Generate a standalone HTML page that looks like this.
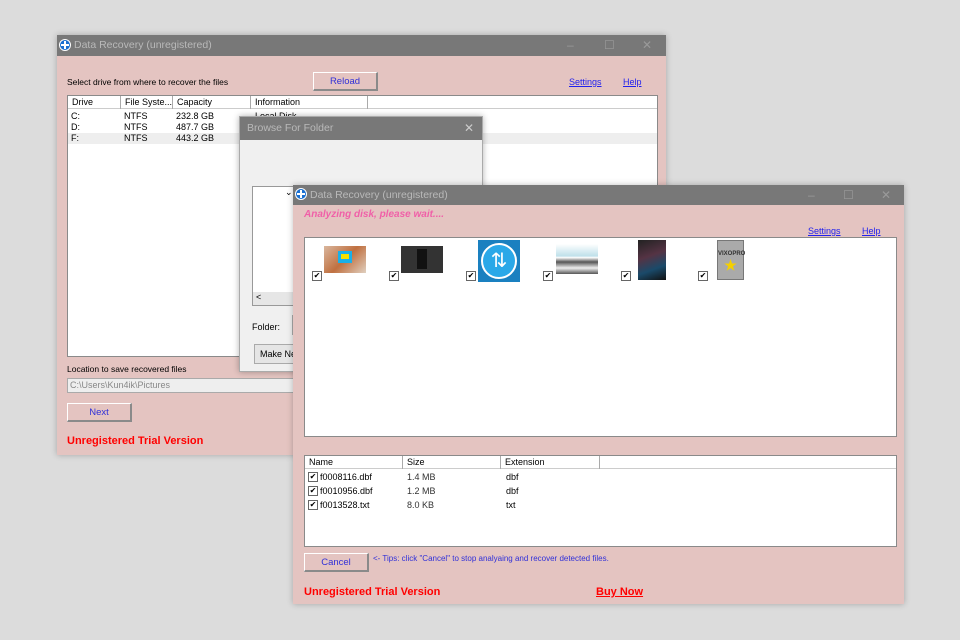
<!DOCTYPE html>
<html><head><meta charset="utf-8"><style>
*{margin:0;padding:0;box-sizing:border-box}
body{width:960px;height:640px;background:#dcdcdc;position:relative;overflow:hidden;font-family:"Liberation Sans",Arial,sans-serif;font-size:9px;color:#000}
.a{position:absolute}
.win{background:#e4c4c1;box-shadow:0 0 6px rgba(0,0,0,.25)}
.tb{background:#787878;color:#b9b9b9;font-size:10.5px;height:21px;line-height:21px;padding-left:17px}
.ico{position:absolute;left:2px;top:4px;width:12px;height:12px;border-radius:50%;background:#1a6fd0;border:1px solid #fff}
.ico:before{content:"";position:absolute;left:4px;top:1px;width:2px;height:8px;background:#fff}
.ico:after{content:"";position:absolute;left:1px;top:4px;width:8px;height:2px;background:#fff}
.ctl{position:absolute;top:0;color:#9a9a9a;font-size:12px}
.white{background:#fff;border:1px solid #8a8a8a}
.hdr{background:#fff;border-bottom:1px solid #ccc;height:13px;line-height:12px;font-size:9px}
.hdr span{position:absolute;top:0;height:13px;border-right:1px solid #aaa;padding-left:4px}
.btn{background:#e4c4c1;border:1px solid #fff;border-right:2px solid #8a8a8a;border-bottom:2px solid #8a8a8a;color:#3030d8;text-align:center;font-size:9.5px}
.link{color:#2222ee;text-decoration:underline;font-size:9px}
.red{color:#f00;font-weight:bold;font-size:11px}
.cb{position:absolute;width:10px;height:10px;border:1px solid #666;background:#fff;font-size:8px;line-height:8px;text-align:center}
.row{position:absolute;font-size:9px;white-space:nowrap}
</style></head><body>

<div class="a win" style="left:57px;top:35px;width:609px;height:420px">
 <div class="tb" style="position:relative">Data Recovery (unregistered)<div class="ico"></div>
  <span class="ctl" style="left:510px">–</span><span class="ctl" style="left:547px">☐</span><span class="ctl" style="left:585px">✕</span></div>
 <div class="a" style="left:10px;top:42px;font-size:8.5px">Select drive from where to recover the files</div>
 <div class="a btn" style="left:256px;top:37px;width:65px;height:19px;line-height:17px">Reload</div>
 <div class="a link" style="left:512px;top:42px">Settings</div>
 <div class="a link" style="left:566px;top:42px">Help</div>
 <div class="a white" style="left:10px;top:60px;width:591px;height:262px">
  <div class="hdr" style="position:relative">
   <span style="left:0;width:53px">Drive</span><span style="left:53px;width:52px">File Syste...</span><span style="left:105px;width:78px">Capacity</span><span style="left:183px;width:117px">Information</span>
  </div>
  <div class="row" style="left:3px;top:15px">C:</div><div class="row" style="left:56px;top:15px">NTFS</div><div class="row" style="left:108px;top:15px">232.8 GB</div><div class="row" style="left:187px;top:15px">Local Disk</div>
  <div class="row" style="left:3px;top:26px">D:</div><div class="row" style="left:56px;top:26px">NTFS</div><div class="row" style="left:108px;top:26px">487.7 GB</div>
  <div class="a" style="left:0;top:37px;width:589px;height:11px;background:#eee"></div>
  <div class="row" style="left:3px;top:37px">F:</div><div class="row" style="left:56px;top:37px">NTFS</div><div class="row" style="left:108px;top:37px">443.2 GB</div>
 </div>
 <div class="a" style="left:10px;top:329px;font-size:8.5px">Location to save recovered files</div>
 <div class="a" style="left:10px;top:343px;width:300px;height:15px;background:#eee;border:1px solid #aaa;color:#888;line-height:13px;padding-left:2px;font-size:9px">C:\Users\Kun4ik\Pictures</div>
 <div class="a btn" style="left:10px;top:368px;width:65px;height:19px;line-height:17px">Next</div>
 <div class="a red" style="left:10px;top:400px">Unregistered Trial Version</div>
</div>

<div class="a" style="left:239px;top:116px;width:244px;height:256px;background:#f0f0f0;border:1px solid #aaa;box-shadow:0 0 6px rgba(0,0,0,.3)">
 <div style="background:#787878;color:#b9b9b9;font-size:10.5px;height:23px;line-height:23px;padding-left:7px;position:relative">Browse For Folder<span style="position:absolute;left:224px;color:#ccc;font-size:12px">✕</span></div>
 <div class="a" style="left:12px;top:69px;width:60px;height:120px;background:#fff;border:1px solid #999">
  <span class="a" style="left:32px;top:0;font-size:9px">⌄</span>
  <div class="a" style="left:0;top:105px;width:58px;height:13px;background:#e6e6e6"><span style="padding-left:3px">&lt;</span></div>
 </div>
 <div class="a" style="left:12px;top:205px;font-size:9px">Folder:</div>
 <div class="a" style="left:52px;top:198px;width:10px;height:20px;border:1px solid #aaa;background:#fff"></div>
 <div class="a" style="left:14px;top:227px;width:60px;height:20px;border:1px solid #aaa;background:#e5e5e5;line-height:18px;padding-left:5px;font-size:9px">Make New</div>
</div>

<div class="a win" style="left:293px;top:185px;width:611px;height:419px">
 <div class="tb" style="position:relative;height:20px;line-height:20px">Data Recovery (unregistered)<div class="ico" style="top:3px"></div>
  <span class="ctl" style="left:515px">–</span><span class="ctl" style="left:550px">☐</span><span class="ctl" style="left:588px">✕</span></div>
 <div class="a" style="left:11px;top:24px;color:#f060a8;font-weight:bold;font-style:italic;font-size:10px">Analyzing disk, please wait....</div>
 <div class="a link" style="left:515px;top:41px">Settings</div>
 <div class="a link" style="left:569px;top:41px">Help</div>
 <div class="a white" style="left:11px;top:52px;width:593px;height:200px">
  <div class="a" style="left:19px;top:8px;width:42px;height:27px;background:linear-gradient(135deg,#d9b79e,#c07040 50%,#e0d0c0)"><div class="a" style="left:14px;top:5px;width:14px;height:12px;background:#1ab0e8"><div style="margin:3px;width:8px;height:5px;background:#f5e000"></div></div></div>
  <div class="cb" style="left:7px;top:33px">✔</div>
  <div class="a" style="left:96px;top:8px;width:42px;height:27px;background:#333"><div style="margin:3px auto;width:10px;height:20px;background:#111"></div></div>
  <div class="cb" style="left:84px;top:33px">✔</div>
  <div class="a" style="left:173px;top:2px;width:42px;height:42px;background:#1a80c0"><div style="margin:3px;width:36px;height:36px;border-radius:50%;background:#2aa8e8;border:2px solid #fff;color:#fff;font-size:20px;text-align:center;line-height:32px">⇅</div></div>
  <div class="cb" style="left:161px;top:33px">✔</div>
  <div class="a" style="left:251px;top:6px;width:42px;height:30px;background:linear-gradient(#fff,#bfe0ea 40%,#fff 45%,#555 60%,#eee 80%,#555)"></div>
  <div class="cb" style="left:238px;top:33px">✔</div>
  <div class="a" style="left:333px;top:2px;width:28px;height:40px;background:linear-gradient(160deg,#222,#534 40%,#1a4a6a 70%,#111)"></div>
  <div class="cb" style="left:316px;top:33px">✔</div>
  <div class="a" style="left:412px;top:2px;width:27px;height:40px;background:#aaa;border:1px solid #777;color:#333;font-size:6px;font-weight:bold;text-align:center;padding-top:10px">VIXOPRO<div style="color:#f5d000;font-size:14px;line-height:16px">★</div></div>
  <div class="cb" style="left:393px;top:33px">✔</div>
 </div>
 <div class="a white" style="left:11px;top:270px;width:593px;height:92px">
  <div class="hdr" style="position:relative">
   <span style="left:0;width:98px">Name</span><span style="left:98px;width:98px">Size</span><span style="left:196px;width:99px">Extension</span>
  </div>
  <div class="cb" style="left:3px;top:16px">✔</div><div class="row" style="left:15px;top:16px">f0008116.dbf</div><div class="row" style="left:102px;top:16px;color:#333">1.4 MB</div><div class="row" style="left:201px;top:16px">dbf</div>
  <div class="cb" style="left:3px;top:30px">✔</div><div class="row" style="left:15px;top:30px">f0010956.dbf</div><div class="row" style="left:102px;top:30px;color:#333">1.2 MB</div><div class="row" style="left:201px;top:30px">dbf</div>
  <div class="cb" style="left:3px;top:44px">✔</div><div class="row" style="left:15px;top:44px">f0013528.txt</div><div class="row" style="left:102px;top:44px;color:#333">8.0 KB</div><div class="row" style="left:201px;top:44px">txt</div>
 </div>
 <div class="a btn" style="left:11px;top:368px;width:65px;height:19px;line-height:17px">Cancel</div>
 <div class="a" style="left:80px;top:369px;color:#3030d8;font-size:8px">&lt;- Tips: click "Cancel" to stop analyaing and recover detected files.</div>
 <div class="a red" style="left:11px;top:401px">Unregistered Trial Version</div>
 <div class="a red" style="left:303px;top:401px;text-decoration:underline">Buy Now</div>
</div>
</body></html>
